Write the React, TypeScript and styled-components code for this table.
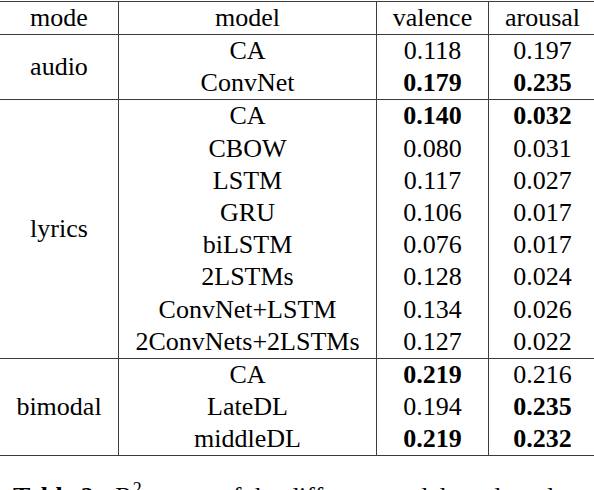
import { FC } from "react"
import styled, { createGlobalStyle } from "styled-components"

const serif = `"Liberation Serif", "Times New Roman", Times, "DejaVu Serif", serif`

const GlobalStyle = createGlobalStyle`
  html, body {
    margin: 0;
    padding: 0;
    background: #ffffff;
  }
  body {
    width: 594px;
    height: 490px;
    overflow: hidden;
    font-family: ${serif};
    color: #000000;
  }
`

const Page = styled.div`
  padding-top: 1px;
`

const Table = styled.table`
  border-collapse: collapse;
  width: 593px;
  table-layout: fixed;
  font-family: ${serif};
  font-size: 26px;
  color: #000000;
  border-top: 1px solid #3c3c3c;
  border-bottom: 1px solid #3c3c3c;
`

const HeadCell = styled.th<{ $width: number, $edge?: boolean, $last?: boolean }>`
  width: ${p => p.$width}px;
  height: 32px;
  padding: 0;
  font-family: ${serif};
  font-weight: normal;
  text-align: center;
  line-height: 30px;
  border-left: ${p => p.$edge ? "none" : "1px solid #3c3c3c"};
  border-right: ${p => p.$last ? "1px solid #3c3c3c" : "none"};
  border-bottom: 1px solid #3c3c3c;
`

const Group = styled.tbody`
  border-bottom: 1px solid #3c3c3c;
`

const ModeCell = styled.td`
  padding: 0;
  font-family: ${serif};
  text-align: center;
  vertical-align: middle;
  line-height: 30px;
`

const Cell = styled.td<{ $bold?: boolean }>`
  height: 32.2px;
  padding: 0;
  font-family: ${serif};
  text-align: center;
  line-height: 30px;
  font-weight: ${p => p.$bold ? "bold" : "normal"};
  border-left: 1px solid #3c3c3c;
`

const LastCell = styled(Cell)`
  border-right: 1px solid #3c3c3c;
`

const Caption = styled.div`
  margin-top: 26px;
  font-family: ${serif};
  font-size: 26px;
  line-height: 30px;
  white-space: nowrap;
  padding-left: 13px;

  b {
    font-weight: bold;
  }

  sup {
    font-size: 18px;
    line-height: 0;
  }
`

type Row = {
  model: string,
  valence: string,
  arousal: string,
  bestValence?: boolean,
  bestArousal?: boolean,
}

type ModeGroup = {
  mode: string,
  rows: Row[],
}

const groups: ModeGroup[] = [
  {
    mode: "audio",
    rows: [
      { model: "CA", valence: "0.118", arousal: "0.197" },
      { model: "ConvNet", valence: "0.179", arousal: "0.235", bestValence: true, bestArousal: true },
    ],
  },
  {
    mode: "lyrics",
    rows: [
      { model: "CA", valence: "0.140", arousal: "0.032", bestValence: true, bestArousal: true },
      { model: "CBOW", valence: "0.080", arousal: "0.031" },
      { model: "LSTM", valence: "0.117", arousal: "0.027" },
      { model: "GRU", valence: "0.106", arousal: "0.017" },
      { model: "biLSTM", valence: "0.076", arousal: "0.017" },
      { model: "2LSTMs", valence: "0.128", arousal: "0.024" },
      { model: "ConvNet+LSTM", valence: "0.134", arousal: "0.026" },
      { model: "2ConvNets+2LSTMs", valence: "0.127", arousal: "0.022" },
    ],
  },
  {
    mode: "bimodal",
    rows: [
      { model: "CA", valence: "0.219", arousal: "0.216", bestValence: true },
      { model: "LateDL", valence: "0.194", arousal: "0.235", bestArousal: true },
      { model: "middleDL", valence: "0.219", arousal: "0.232", bestValence: true, bestArousal: true },
    ],
  },
]

const App: FC = () => {
  return (
    <Page>
      <GlobalStyle />
      <Table>
        <thead>
          <tr>
            <HeadCell $width={118} $edge>mode</HeadCell>
            <HeadCell $width={257}>model</HeadCell>
            <HeadCell $width={111}>valence</HeadCell>
            <HeadCell $width={107} $last>arousal</HeadCell>
          </tr>
        </thead>
        {groups.map(group => (
          <Group key={group.mode}>
            {group.rows.map((row, i) => (
              <tr key={row.model}>
                {i === 0 && <ModeCell rowSpan={group.rows.length}>{group.mode}</ModeCell>}
                <Cell>{row.model}</Cell>
                <Cell $bold={row.bestValence}>{row.valence}</Cell>
                <LastCell $bold={row.bestArousal}>{row.arousal}</LastCell>
              </tr>
            ))}
          </Group>
        ))}
      </Table>
      <Caption>
        <b>Table 2:</b>&nbsp; R<sup>2</sup> scores of the different models and modes.
      </Caption>
    </Page>
  )
}

export default App
